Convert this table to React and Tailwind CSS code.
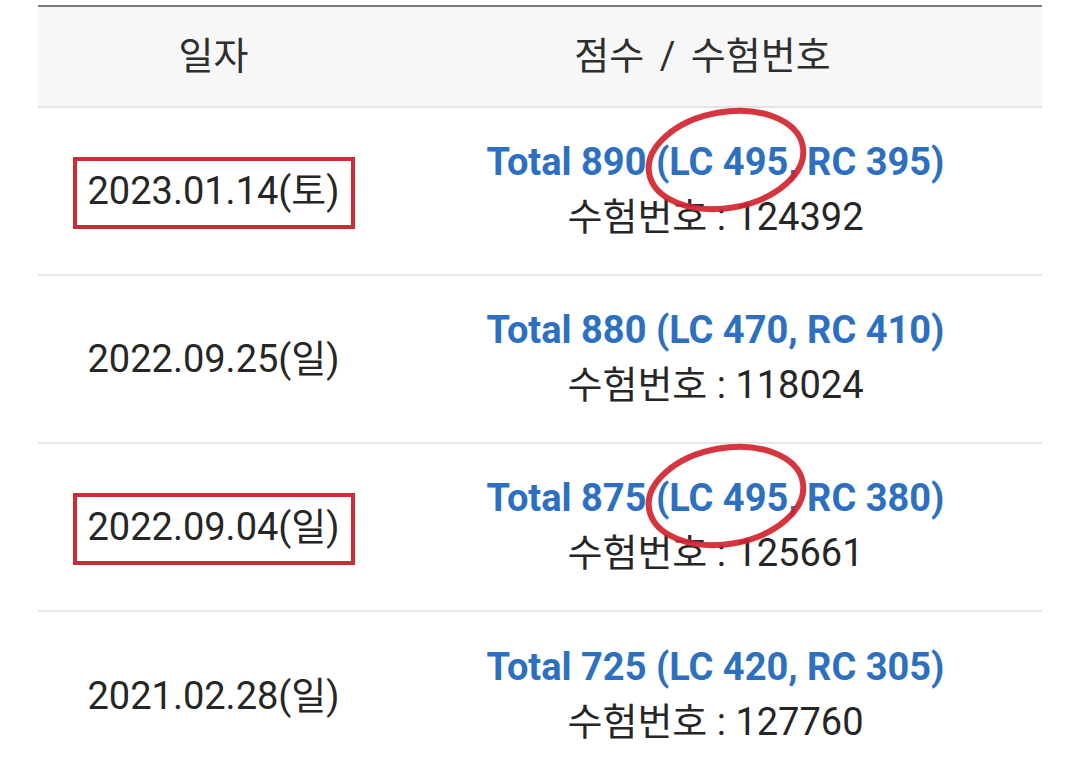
import React from 'react'

const rows = [
    { date: '2023.01.14(토)', total: 890, lc: 495, rc: 395, no: '124392', marked: true },
    { date: '2022.09.25(일)', total: 880, lc: 470, rc: 410, no: '118024', marked: false },
    { date: '2022.09.04(일)', total: 875, lc: 495, rc: 380, no: '125661', marked: true },
    { date: '2021.02.28(일)', total: 725, lc: 420, rc: 305, no: '127760', marked: false },
];

function Ellipse() {
    return (
        <svg
            className="pointer-events-none absolute left-[139px] top-[-50px]"
            width="200"
            height="150"
            viewBox="0 0 200 150"
            aria-hidden="true"
        >
            <ellipse
                cx="100"
                cy="75"
                rx="78"
                ry="48"
                transform="rotate(-10 100 75)"
                fill="none"
                stroke="#d3232e"
                strokeOpacity="0.92"
                strokeWidth="6"
            />
        </svg>
    )
}

function ScoreRow({ row, last }) {
    return (
        <div className={`grid h-[168px] grid-cols-[351px_1fr] ${last ? '' : 'border-b-2 border-[#e6e6e6]'}`}>
            <div className="flex items-center justify-center">
                <span className="relative inline-block text-[38px] leading-[55px] text-[#262626]">
                    {row.date}
                    {row.marked && (
                        <span className="absolute left-[-14px] right-[-15px] top-[-7px] bottom-[-10px] border-4 border-[#c92e37]" />
                    )}
                </span>
            </div>
            <div className="flex flex-col items-center justify-center pb-[2px]">
                <span className="relative inline-block text-[38px] font-bold leading-[55px] text-[#2d70c0]">
                    Total {row.total} (LC {row.lc}, RC {row.rc})
                    {row.marked && <Ellipse />}
                </span>
                <span className="text-[38px] leading-[55px] text-[#262626]">
                    수험번호 : {row.no}
                </span>
            </div>
        </div>
    )
}

export default function App() {
    return (
        <div className="h-[761px] w-[1079px] overflow-hidden bg-white pt-[5px] font-['Roboto','Noto_Sans_CJK_KR',sans-serif]">
            <div className="ml-[38px] w-[1004px] border-t-2 border-[#7a7a7a]">
                <div className="grid h-[101px] grid-cols-[351px_1fr] border-b-2 border-[#e3e3e3] bg-[#f7f7f7] text-[38px] text-[#2e2e2e]">
                    <div className="flex items-center justify-center">일자</div>
                    <div className="flex items-center justify-center pr-[26px] [word-spacing:6px]">점수 / 수험번호</div>
                </div>
                {rows.map((row, i) => (
                    <ScoreRow key={row.date} row={row} last={i === rows.length - 1} />
                ))}
            </div>
        </div>
    )
}
